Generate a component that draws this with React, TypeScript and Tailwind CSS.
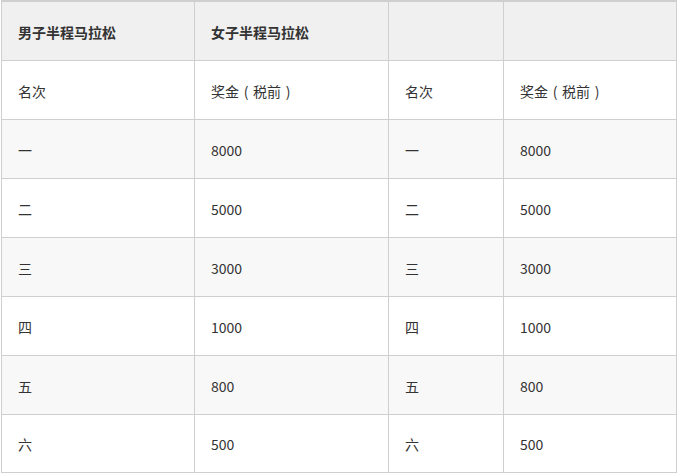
const rows: [string, string][] = [
  ["一", "8000"],
  ["二", "5000"],
  ["三", "3000"],
  ["四", "1000"],
  ["五", "800"],
  ["六", "500"],
];

function Cell({ children, bg, bold, h }: { children?: React.ReactNode; bg: string; bold?: boolean; h: string }) {
  return (
    <div className={`${bg} ${h} flex items-center pl-[16px] pt-[2px] text-[14px] text-[#333] ${bold ? "font-bold" : ""}`}>
      {children}
    </div>
  );
}

// the parens in the shot sit in the middle of their full-width box
function Prize() {
  return (
    <span className="flex">
      奖金
      <span className="w-[14px] text-center">(</span>
      税前
      <span className="w-[14px] text-center">)</span>
    </span>
  );
}

export default function App() {
  return (
    <div className="w-[678px] h-[474px] bg-white" style={{ fontFamily: '"Noto Sans CJK SC", "Noto Sans", sans-serif' }}>
      <div className="ml-[1px] w-[676px] bg-[#cfcfcf] pt-[2px] px-px pb-px grid grid-cols-[192px_193px_114px_172px] gap-px">
        <Cell bg="bg-[#f0f0f0]" bold h="h-[58px]">男子半程马拉松</Cell>
        <Cell bg="bg-[#f0f0f0]" bold h="h-[58px]">女子半程马拉松</Cell>
        <Cell bg="bg-[#f0f0f0]" h="h-[58px]" />
        <Cell bg="bg-[#f0f0f0]" h="h-[58px]" />

        <Cell bg="bg-white" h="h-[58px]">名次</Cell>
        <Cell bg="bg-white" h="h-[58px]"><Prize /></Cell>
        <Cell bg="bg-white" h="h-[58px]">名次</Cell>
        <Cell bg="bg-white" h="h-[58px]"><Prize /></Cell>

        {rows.map(([rank, prize], i) => {
          const bg = i % 2 === 0 ? "bg-[#f8f8f8]" : "bg-white";
          const h = i === rows.length - 1 ? "h-[57px]" : "h-[58px]";
          return [
            <Cell key={`a${i}`} bg={bg} h={h}>{rank}</Cell>,
            <Cell key={`b${i}`} bg={bg} h={h}>{prize}</Cell>,
            <Cell key={`c${i}`} bg={bg} h={h}>{rank}</Cell>,
            <Cell key={`d${i}`} bg={bg} h={h}>{prize}</Cell>,
          ];
        })}
      </div>
    </div>
  );
}
